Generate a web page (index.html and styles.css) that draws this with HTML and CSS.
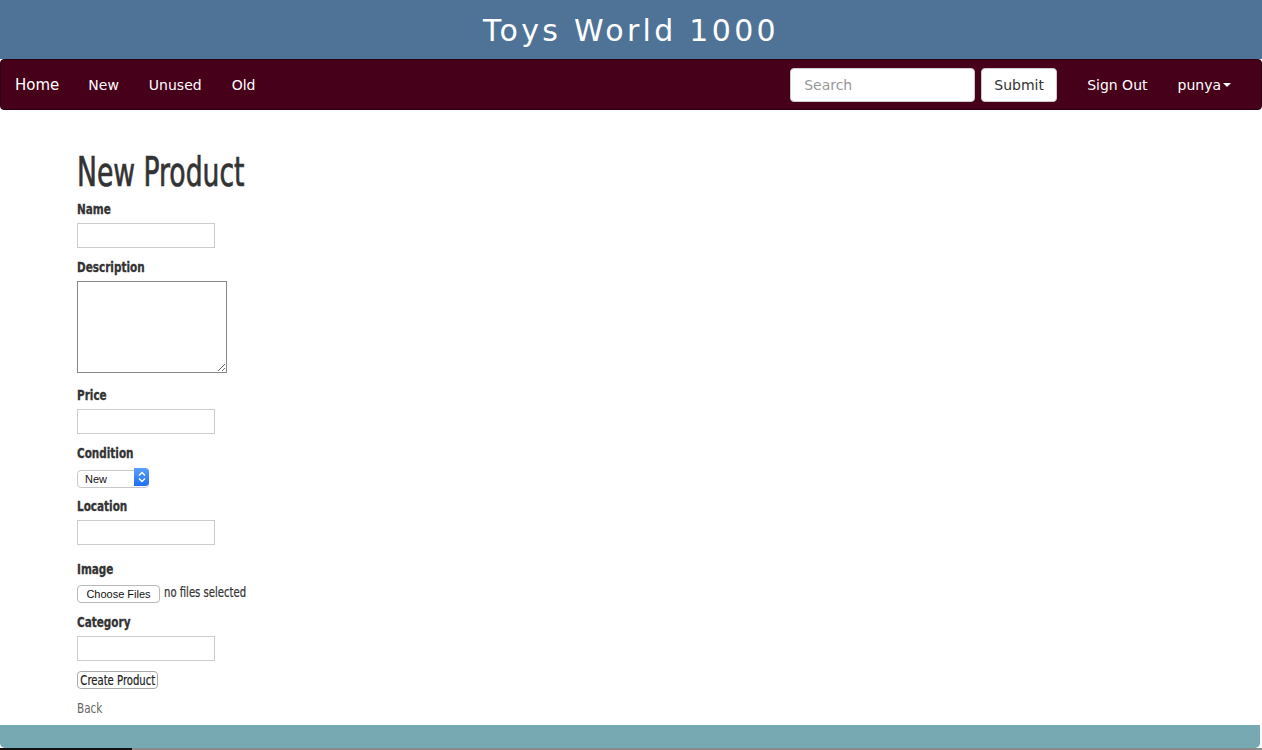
FILE: index.html
```html
<!DOCTYPE html>
<html lang="en">
<head>
<meta charset="utf-8">
<title>Toys World 1000</title>
<link rel="stylesheet" href="styles.css">
</head>
<body>
<header class="masthead">
  <h2 class="site-title">Toys World 1000</h2>
</header>
<nav class="navbar">
  <ul class="nav-left">
    <li><a href="#" class="brand">Home</a></li>
    <li><a href="#">New</a></li>
    <li><a href="#">Unused</a></li>
    <li><a href="#">Old</a></li>
  </ul>
  <div class="nav-right">
    <form class="search-form">
      <input type="text" class="search-input" placeholder="Search">
      <button type="button" class="search-btn">Submit</button>
    </form>
    <a href="#" class="nav-link">Sign Out</a>
    <a href="#" class="nav-link user">punya<span class="caret"></span></a>
  </div>
</nav>
<main class="content">
  <h1 class="page-title">New Product</h1>
  <form class="product-form">
    <div class="field">
      <label class="lbl">Name</label>
      <input type="text" class="txt">
    </div>
    <div class="field">
      <label class="lbl">Description</label>
      <textarea class="area"></textarea>
    </div>
    <div class="field">
      <label class="lbl">Price</label>
      <input type="text" class="txt">
    </div>
    <div class="field field-select">
      <label class="lbl">Condition</label>
      <span class="select-wrap">
        <select class="sel"><option>New</option><option>Unused</option><option>Old</option></select>
        <span class="sel-arrows"><svg width="8" height="12" viewBox="0 0 8 12"><path d="M1 4.5 L4 1.5 L7 4.5 M1 7.5 L4 10.5 L7 7.5" fill="none" stroke="#fff" stroke-width="1.4"/></svg></span>
      </span>
    </div>
    <div class="field field-loc">
      <label class="lbl">Location</label>
      <input type="text" class="txt">
    </div>
    <div class="field field-file">
      <label class="lbl">Image</label>
      <div class="file-row">
        <button type="button" class="file-btn">Choose Files</button>
        <span class="file-note">no files selected</span>
      </div>
    </div>
    <div class="field field-cat">
      <label class="lbl">Category</label>
      <input type="text" class="txt">
    </div>
    <div class="actions">
      <button type="button" class="create-btn"><span class="create-text">Create Product</span></button>
    </div>
  </form>
  <a href="#" class="back">Back</a>
</main>
<footer class="footer"></footer>
<div class="under"><span class="under-dark"></span></div>
</body>
</html>
```

FILE: styles.css
```css
* { box-sizing: border-box; }
html, body { margin: 0; padding: 0; background: #fff; }
body { font-family: "DejaVu Sans", Verdana, sans-serif; color: #333; overflow: hidden; height: 750px; display: flex; flex-direction: column; }

.masthead { flex: none; background: #4e7397; height: 59px; display: flex; align-items: center; justify-content: center; }
.site-title { margin: 0; color: #fff; font-weight: normal; font-size: 30px; letter-spacing: 3.3px; line-height: 1; padding-top: 3px; }

.navbar { flex: none; background: #46001a; height: 51px; border-radius: 4px; border: 1px solid #2a0010; display: flex; align-items: center; justify-content: space-between; }
.nav-left { list-style: none; margin: 0; padding: 0; display: flex; }
.nav-left a { display: block; color: #fff; text-decoration: none; font-size: 14px; padding: 0 15px; line-height: 20px; }
.nav-left a.brand { padding-left: 14px; padding-right: 14px; font-size: 15px; }
.nav-right { display: flex; align-items: center; padding-right: 30px; }
.search-form { display: flex; gap: 6px; margin-right: 15px; }
.search-input { width: 185px; height: 34px; border: 1px solid #ccc; border-radius: 4px; padding: 6px 13px; font-family: "DejaVu Sans", sans-serif; font-size: 14px; color: #555; }
.search-input::placeholder { color: #999; }
.search-btn { width: 76px; height: 34px; background: #fff; border: 1px solid #ccc; border-radius: 4px; font-family: "DejaVu Sans", sans-serif; font-size: 14px; color: #333; padding: 0; }
.nav-link { color: #fff; text-decoration: none; font-size: 14px; padding: 0 15px; line-height: 20px; display: flex; align-items: center; }
.nav-link.user { padding-left: 15px; padding-right: 0; }
.caret { display: inline-block; width: 0; height: 0; border-top: 4px solid #fff; border-left: 4px solid transparent; border-right: 4px solid transparent; margin-left: 2px; margin-top: 1px; }

.content { flex: 1; padding: 39px 0 0 77px; font-family: "DejaVu Sans Condensed", "Arial Narrow", sans-serif; }
.page-title { margin: 0 0 4px; font-family: "DejaVu Sans Condensed", sans-serif; font-weight: normal; font-size: 40px; line-height: 46px; color: #333; -webkit-text-stroke: 0.7px #333; transform: scaleX(0.74); transform-origin: left center; white-space: nowrap; }

.product-form { display: flex; flex-direction: column; align-items: flex-start; }
.field { display: flex; flex-direction: column; align-items: flex-start; margin-bottom: 9px; }
.lbl { display: block; font-weight: bold; font-size: 14px; line-height: 20px; color: #333; margin-bottom: 4px; transform: scaleX(0.83); transform-origin: left center; white-space: nowrap; -webkit-text-stroke: 0.3px #333; }
.txt { width: 138px; height: 25px; border: 1px solid #ccc; padding: 2px 4px; font-size: 13px; margin: 0; }
.area { width: 150px; height: 92px; border: 1px solid #888; margin: 0 0 3px; resize: both; display: block; }
.field-select { margin-bottom: 10px; }
.field-select .lbl { margin-bottom: 5px; }
.select-wrap { position: relative; display: inline-block; width: 72px; height: 18px; }
.sel { appearance: none; -webkit-appearance: none; width: 72px; height: 18px; border: 1px solid #c8c8c8; border-radius: 4px; background: #fff; font-family: "Liberation Sans", Arial, sans-serif; font-size: 11px; padding: 0 0 0 7px; color: #111; margin: 0; line-height: 16px; }
.sel-arrows { position: absolute; right: 0; top: 0; width: 15px; height: 18px; border-radius: 0 4px 4px 0; background: linear-gradient(#5aa0fb, #1f6ff0); display: flex; align-items: center; justify-content: center; }
.field-loc { margin-bottom: 14px; }
.field-file .lbl { margin-bottom: 6px; }
.file-row { display: flex; align-items: flex-start; gap: 4px; }
.file-btn { height: 18px; width: 83px; padding: 0; background: #fff; border: 1px solid #b9b9b9; border-radius: 4px; font-family: "Liberation Sans", Arial, sans-serif; font-size: 11px; color: #111; }
.file-note { display: inline-block; font-size: 14px; line-height: 14px; color: #333; transform: scaleX(0.8); transform-origin: left center; white-space: nowrap; -webkit-text-stroke: 0.2px #333; }
.field-cat { margin-bottom: 10px; }
.actions { margin-bottom: 9px; }
.create-btn { height: 18px; width: 81px; padding: 0; background: #fff; border: 1px solid #aaa; border-radius: 4px; font-family: "DejaVu Sans Condensed", sans-serif; font-size: 14px; color: #222; line-height: 16px; display: flex; justify-content: center; align-items: center; overflow: visible; }
.create-text { display: inline-block; transform: scaleX(0.8); white-space: nowrap; -webkit-text-stroke: 0.2px #222; }
.back { color: #666; text-decoration: none; font-size: 14px; line-height: 20px; display: inline-block; transform: scaleX(0.83); transform-origin: left center; align-self: flex-start; }

.footer { height: 23px; background: #76a9b1; border-radius: 0 0 5px 5px; margin-right: 2px; flex: none; }
.under { height: 2px; background: #8a8a8a; display: flex; flex: none; }
.under-dark { width: 132px; background: #111; }
```
